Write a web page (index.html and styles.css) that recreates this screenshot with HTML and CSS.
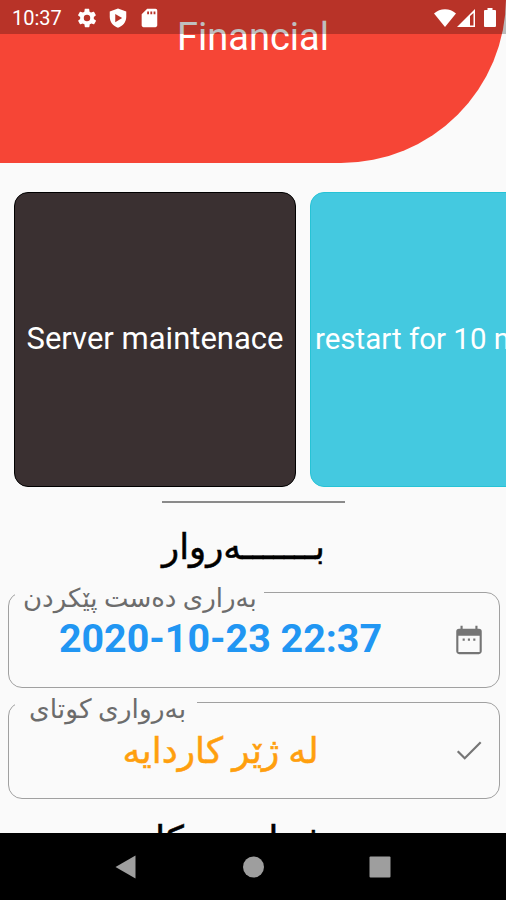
FILE: index.html
```html
<!DOCTYPE html>
<html lang="ckb">
  <head>
    <meta charset="UTF-8" />
    <meta name="viewport" content="width=device-width, initial-scale=1.0" />
    <title>Financial</title>
    <link rel="stylesheet" href="styles.css">
  </head>
  <body>
    <div class="status-bar">
      <span class="time">10:37</span>
      <svg class="gear" width="22" height="22" viewBox="0 0 24 24"><path d="M19.4 13c0-.3.1-.6.1-1s0-.7-.1-1l2.1-1.6c.2-.2.2-.4.1-.6l-2-3.5c-.1-.2-.4-.3-.6-.2l-2.5 1c-.5-.4-1.1-.7-1.7-1l-.4-2.6c0-.3-.2-.5-.4-.5h-4c-.3 0-.5.2-.5.4l-.4 2.7c-.6.2-1.2.6-1.7 1l-2.5-1c-.2-.1-.5 0-.6.2l-2 3.5c-.1.2-.1.5.1.6L4.6 11c0 .3-.1.7-.1 1s0 .7.1 1l-2.1 1.6c-.2.2-.2.4-.1.6l2 3.5c.1.2.4.3.6.2l2.5-1c.5.4 1.1.7 1.7 1l.4 2.6c0 .3.2.5.5.5h4c.2 0 .4-.2.5-.4l.4-2.7c.6-.2 1.2-.6 1.7-1l2.5 1c.2.1.5 0 .6-.2l2-3.5c.1-.2.1-.5-.1-.6zM12 15.500a3.500 3.500 0 1 1 0-7 3.500 3.500 0 0 1 0 7z" fill-rule="evenodd"/></svg>
      <svg class="shield" width="22" height="22" viewBox="0 0 24 24"><path d="M12 1.500 3 5v6c0 5.500 3.800 10 9 11.500 5.200-1.500 9-6 9-11.500V5zM9 7.500l7.500 4.500L9 16.500z" fill-rule="evenodd"/></svg>
      <svg class="sd" width="22" height="22" viewBox="0 0 24 24"><path d="M19 2h-9L4 8v12c0 1.100.900 2 2 2h13c1.100 0 2-.900 2-2V4c0-1.100-.900-2-2-2zM10 5h2v3h-2zM13.500 5h2v3h-2zM17 5h2v3h-2z" fill-rule="evenodd"/></svg>
      <span class="spacer"></span>
      <svg width="22" height="18" viewBox="0 0 22 18"><path d="M11 18 0 4.500C6-1.300 16-1.300 22 4.500z"/></svg>
      <svg class="signal" width="18" height="18" viewBox="0 0 18 18"><path d="M18 0v18H0zM13 7v9.500h3.500V4z" fill-rule="evenodd"/></svg>
      <svg class="battery" width="12" height="19" viewBox="0 0 12 19"><path d="M3.500 0h5v2H11a1 1 0 0 1 1 1v15a1 1 0 0 1-1 1H1a1 1 0 0 1-1-1V3a1 1 0 0 1 1-1h2.500z"/></svg>
    </div>

    <main class="screen">
      <header class="header">
        <h1>Financial</h1>
      </header>

      <div class="cards">
        <div class="card dark">Server maintenace</div>
        <div class="card cyan">restart for 10 min</div>
      </div>

      <hr class="divider">

      <h2 class="heading" dir="rtl">بـــــــەروار</h2>

      <fieldset class="field">
        <legend><span dir="rtl">بەراری دەست پێکردن</span></legend>
        <span class="value date">2020-10-23 22:37</span>
        <svg class="icon" width="34" height="34" viewBox="0 0 24 24"><path d="M19 4h-1V2h-1.500v2h-9V2H6v2H5a2 2 0 0 0-2 2v14c0 1.100.900 2 2 2h14c1.100 0 2-.900 2-2V6a2 2 0 0 0-2-2zm.5 16.500h-15V9h15zM7.500 11h1.500v1.500H7.500zM11.200 11h1.500v1.500h-1.500zM15 11h1.500v1.500H15z"/></svg>
      </fieldset>

      <fieldset class="field end">
        <legend><span dir="rtl">بەرواری کوتای</span></legend>
        <span class="value progress" dir="rtl">لە ژێر کاردایە</span>
        <svg class="icon" width="34" height="34" viewBox="0 0 24 24"><path d="M9 16.700 4.600 12.300l-1.100 1.100L9 18.900 20.800 7.100 19.700 6z"/></svg>
      </fieldset>

      <h2 class="heading members" dir="rtl">بەشداربووەکان</h2>
    </main>

    <nav class="nav-bar">
      <svg width="22" height="26" viewBox="0 0 22 26"><path d="M20.500 1.500v23L.5 13z"/></svg>
      <svg width="22" height="22" viewBox="0 0 22 22"><circle cx="11.500" cy="11" r="10.500"/></svg>
      <svg width="22" height="22" viewBox="0 0 22 22"><rect x=".5" y=".5" width="21" height="21" rx="1"/></svg>
    </nav>
  </body>
</html>
```
FILE: styles.css
```css
* {
  box-sizing: border-box;
}
body {
  margin: 0;
  height: 900px;
  display: flex;
  flex-direction: column;
  overflow: hidden;
  background-color: #fafafa;
  font-family: Roboto, "DejaVu Sans", sans-serif;
}
h1, h2 {
  margin: 0;
  font-weight: 400;
}
svg {
  display: block;
  flex: none;
}

/* system bar lies over the scrolled page */
.status-bar {
  position: absolute;
  top: 0;
  left: 0;
  z-index: 1;
  width: 100%;
  height: 34px;
  padding: 1px 10px 0 12px;
  display: flex;
  align-items: center;
  background-color: rgba(0, 0, 0, 0.25);
  color: #fff;
  fill: #fff;
}
.time {
  width: 64px;
  font-size: 20px;
}
.shield {
  margin-left: 9px;
}
.sd {
  margin-left: 9px;
}
.spacer {
  flex: 1;
}
.signal {
  margin-left: 1px;
}
.battery {
  margin-left: 9px;
}

.screen {
  flex: 1;
  min-height: 0;
  overflow: hidden;
}
.header {
  height: 223px;
  margin-top: -60px;
  padding-top: 74px;
  background-color: #f64536;
  border-bottom-right-radius: 165px;
  color: #fff;
  text-align: center;
}
.header h1 {
  font-size: 38px;
  line-height: 46px;
}
.cards {
  display: flex;
  gap: 14px;
  padding: 29px 0 0 14px;
}
.card {
  flex: none;
  width: 282px;
  height: 295px;
  padding-bottom: 2px;
  display: flex;
  align-items: center;
  justify-content: center;
  border-radius: 14px;
  color: #fff;
  font-size: 31px;
  white-space: nowrap;
}
.dark {
  background-color: #3a3031;
  border: 1px solid #000;
}
.cyan {
  background-color: #44c9e0;
  border: 1px solid #26c3d6;
  justify-content: flex-start;
  padding-left: 4px;
  font-size: 29.5px;
}
.divider {
  width: 183px;
  height: 2px;
  margin: 14px 0 0 162px;
  border: 0;
  background-color: #8a8a8a;
}
.heading {
  height: 81px;
  padding-right: 19px;
  line-height: 89px;
  text-align: center;
  font-size: 35.5px;
  -webkit-text-stroke: 0.5px #000;
}
.members {
  line-height: 81px;
  font-size: 37px;
}

.field {
  position: relative;
  width: 492px;
  height: 104px;
  margin: 0 0 6px 8px;
  padding: 15px 67px 0 0;
  border: 1px solid #a0a0a0;
  border-radius: 14px;
}
.field legend {
  height: 16px;
  margin-left: 6px;
  padding: 0 7px 0 8px;
  line-height: 29px;
  color: #6c6c6c;
  font-size: 26px;
}
.end {
  height: 105px;
  margin-bottom: 0;
  padding-top: 17px;
}
.end legend {
  padding: 0 11px 0 14px;
  font-size: 26.500px;
}
.value {
  display: block;
  text-align: center;
  line-height: 48px;
}
.date {
  color: #2196f3;
  font-size: 39.400px;
  font-weight: 700;
}
.progress {
  color: #ff9f0e;
  font-size: 36px;
  -webkit-text-stroke: 0.5px #ff9f0e;
}
.icon {
  position: absolute;
  right: 13px;
  top: 23px;
  fill: #757575;
}

.nav-bar {
  height: 67px;
  display: flex;
  justify-content: space-between;
  align-items: center;
  padding: 0 115px;
  background-color: #000;
  fill: #9e9e9e;
}
```
